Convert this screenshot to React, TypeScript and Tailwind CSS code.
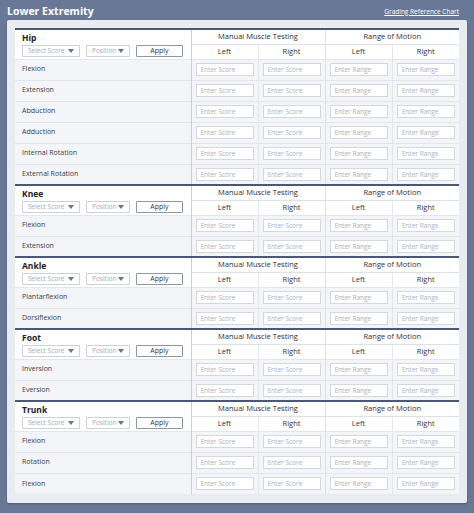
import React from 'react';

type Section = { name: string; rows: string[] };

const sections: Section[] = [
  { name: 'Hip', rows: ['Flexion', 'Extension', 'Abduction', 'Adduction', 'Internal Rotation', 'External Rotation'] },
  { name: 'Knee', rows: ['Flexion', 'Extension'] },
  { name: 'Ankle', rows: ['Plantarflexion', 'Dorsiflexion'] },
  { name: 'Foot', rows: ['Inversion', 'Eversion'] },
  { name: 'Trunk', rows: ['Flexion', 'Rotation', 'Flexion'] },
];

function Caret() {
  return (
    <svg width="6" height="4" viewBox="0 0 6 4" className="shrink-0">
      <path d="M0 0h6L3 4z" fill="#6b7280" />
    </svg>
  );
}

function Field({ text }: { text: string }) {
  return (
    <div className="mx-auto h-[13px] w-[58px] border border-[#d3d8df] bg-white pl-[4px] text-[6.5px] leading-[11px] text-[#aab1bc]">
      {text}
    </div>
  );
}

function SectionBlock({ section }: { section: Section }) {
  return (
    <tbody>
      <tr className="h-[15px] border-t-2 border-[#4b5874] bg-white">
        <td rowSpan={2} className="border-r border-[#c9cfd9] px-[7px] align-top">
          <div className="pt-[2px] text-[8.5px] font-bold leading-[11px] text-[#222]">{section.name}</div>
          <div className="mt-[2px] flex items-center gap-[6px]">
            <div className="flex h-[12px] w-[58px] items-center justify-between border border-[#cdd2da] bg-white px-[5px] text-[6.5px] text-[#a3abb7]">
              <span>Select Score</span>
              <Caret />
            </div>
            <div className="flex h-[12px] w-[44px] items-center justify-between border border-[#cdd2da] bg-white px-[5px] text-[6.5px] text-[#a3abb7]">
              <span>Position</span>
              <Caret />
            </div>
            <div className="flex h-[12px] w-[47px] items-center justify-center rounded-[1px] border border-[#8f97a6] bg-white text-[7px] text-[#333]">
              Apply
            </div>
          </div>
        </td>
        <td colSpan={2} className="border-r border-b border-[#dde2e9] text-center text-[7.5px] text-[#333]">
          Manual Muscle Testing
        </td>
        <td colSpan={2} className="border-b border-[#dde2e9] text-center text-[7.5px] text-[#333]">
          Range of Motion
        </td>
      </tr>
      <tr className="h-[15px] bg-white">
        <td className="border-r border-[#e3e7ed] text-center text-[7.5px] text-[#333]">Left</td>
        <td className="border-r border-[#dde2e9] text-center text-[7.5px] text-[#333]">Right</td>
        <td className="border-r border-[#e3e7ed] text-center text-[7.5px] text-[#333]">Left</td>
        <td className="text-center text-[7.5px] text-[#333]">Right</td>
      </tr>
      {section.rows.map((r, i) => (
        <tr key={i} className="h-[21px] border-t border-[#e2e6ec] bg-[#f3f5f8]">
          <td className="border-r border-[#c9cfd9] px-[7px] text-[7px] text-[#3a3f47]">{r}</td>
          <td className="border-r border-[#e3e7ed]"><Field text="Enter Score" /></td>
          <td className="border-r border-[#dde2e9]"><Field text="Enter Score" /></td>
          <td className="border-r border-[#e3e7ed]"><Field text="Enter Range" /></td>
          <td><Field text="Enter Range" /></td>
        </tr>
      ))}
    </tbody>
  );
}

export default function App() {
  return (
    <div className="min-h-[513px] w-[474px] bg-[#6a7898] px-[7px] pt-[3px]" style={{ fontFamily: '"Open Sans", "Noto Sans", sans-serif' }}>
      <div className="flex h-[17px] items-center justify-between">
        <span className="text-[10.5px] font-bold text-white">Lower Extremity</span>
        <span className="pr-[8px] text-[6.5px] text-white underline">Grading Reference Chart</span>
      </div>
      <div className="rounded-[2px] bg-[#e9edf2] px-[8px] pt-[8px] pb-[9px] shadow-[0_1px_2px_rgba(0,0,0,0.25)]">
        <table className="w-[444px] table-fixed border-collapse bg-white">
          <colgroup>
            <col className="w-[176px]" />
            <col className="w-[67px]" />
            <col className="w-[67px]" />
            <col className="w-[67px]" />
            <col className="w-[67px]" />
          </colgroup>
          {sections.map((s) => (
            <SectionBlock key={s.name} section={s} />
          ))}
        </table>
      </div>
    </div>
  );
}
